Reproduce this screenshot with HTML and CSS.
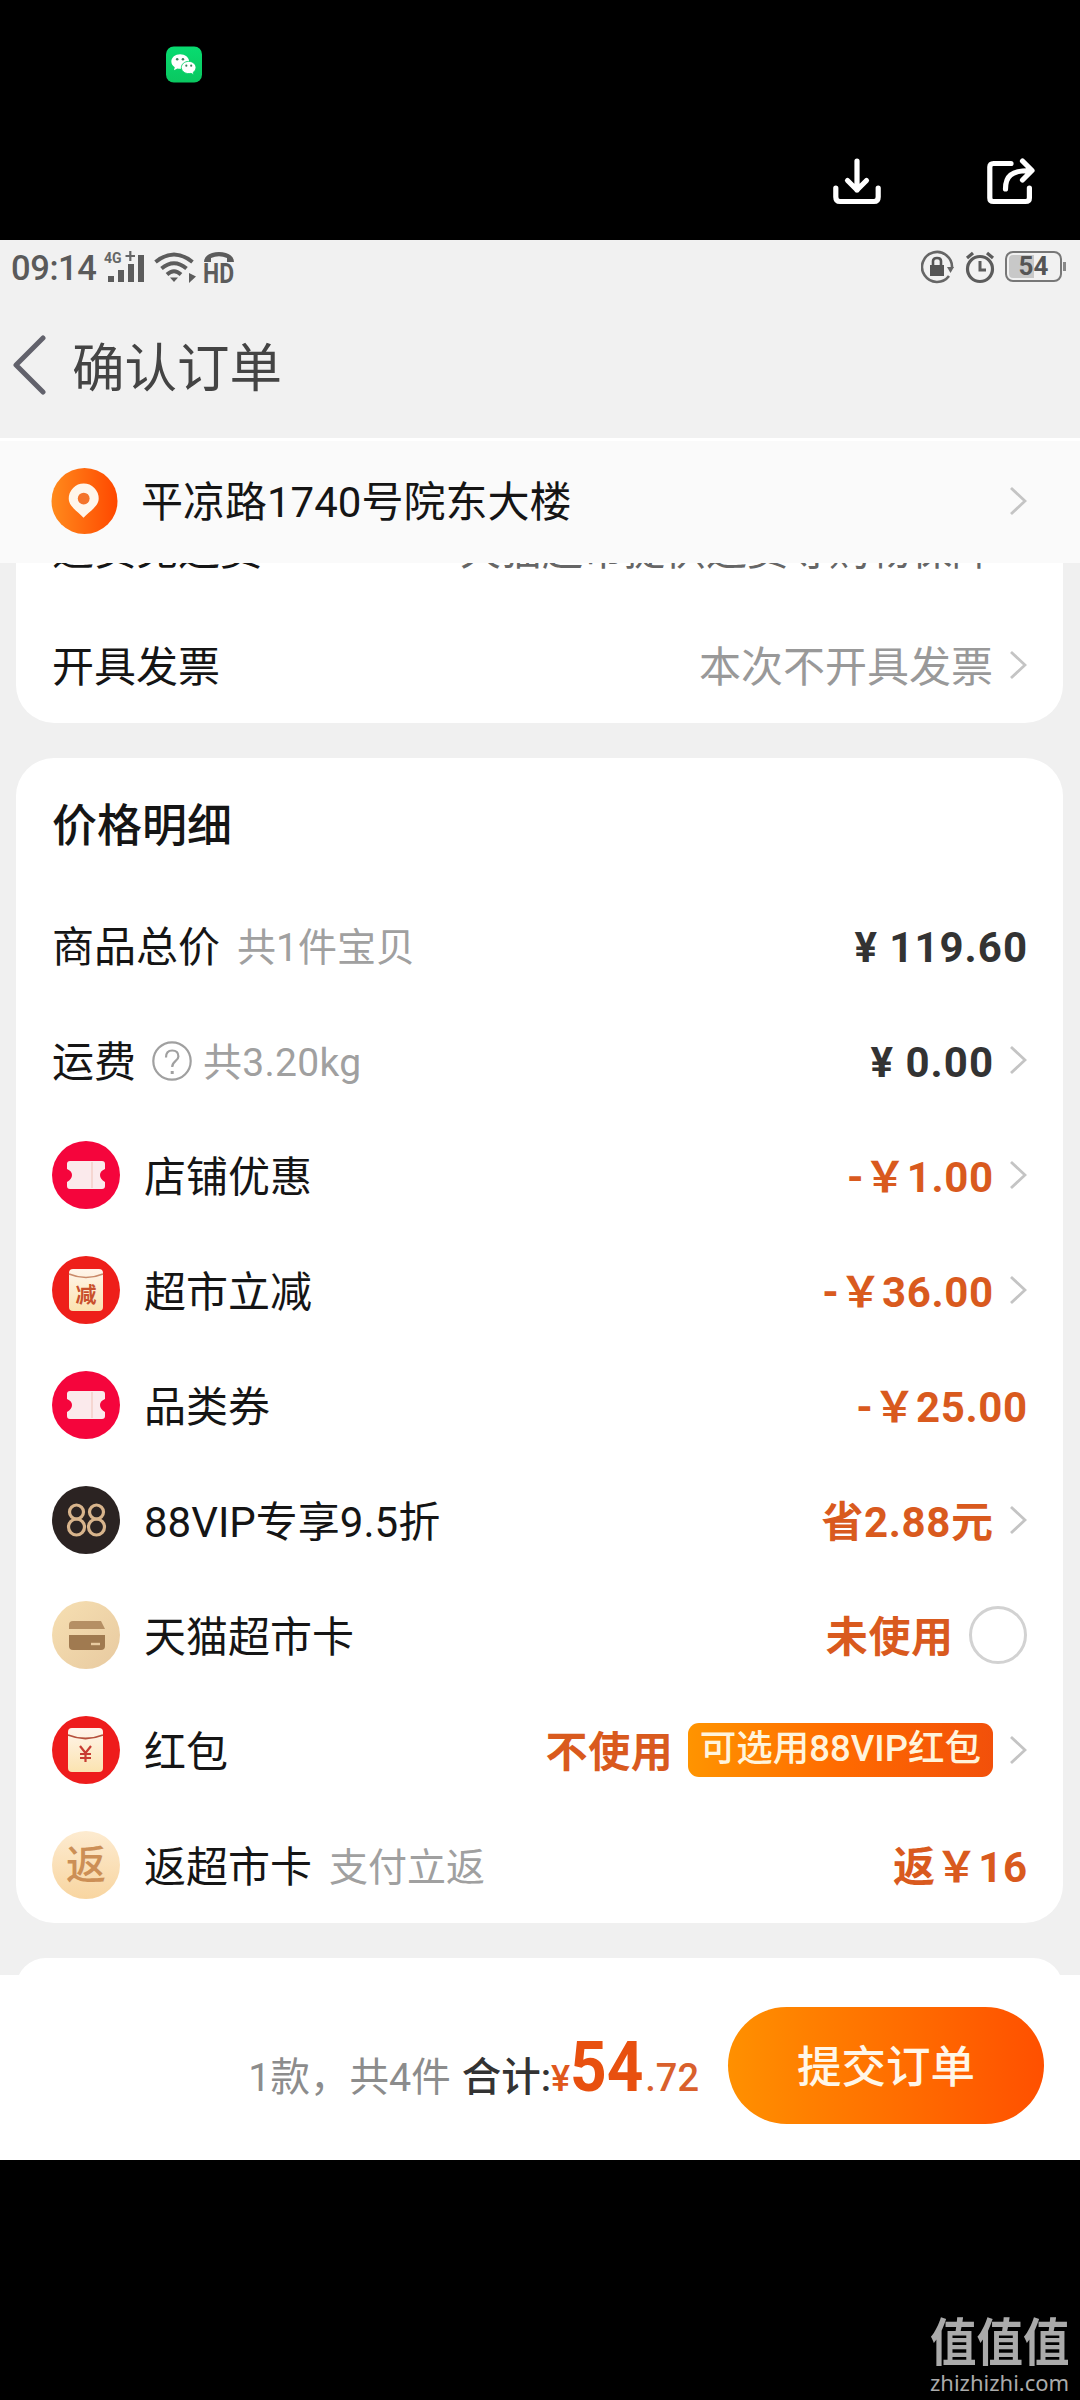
FILE: index.html
```html
<!DOCTYPE html>
<html lang="zh-CN">
<head>
<meta charset="utf-8">
<title>确认订单</title>
<link rel="stylesheet" href="styles.css">
</head>
<body>
<svg class="defs" aria-hidden="true">
  <defs>
    <linearGradient id="gOrange" x1="0" y1="0" x2="1" y2="0"><stop offset="0" stop-color="#ff8a1c"/><stop offset="1" stop-color="#ff4800"/></linearGradient>
    <linearGradient id="gCream" x1="0" y1="0" x2="0" y2="1"><stop offset="0" stop-color="#fff5ec"/><stop offset="1" stop-color="#fbe3b0"/></linearGradient>
    <linearGradient id="gGold" x1="0" y1="0" x2="1" y2="1"><stop offset="0" stop-color="#f6dfb2"/><stop offset="1" stop-color="#e8caa0"/></linearGradient>
    <linearGradient id="gPeach" x1="0" y1="0" x2="0" y2="1"><stop offset="0" stop-color="#fdebd0"/><stop offset="1" stop-color="#f8d5a0"/></linearGradient>
    <linearGradient id="gGreen" x1="0" y1="0" x2="0" y2="1"><stop offset="0" stop-color="#08dc70"/><stop offset="1" stop-color="#0ac760"/></linearGradient>
    <symbol id="chev" viewBox="0 0 18 30"><path d="M2 2 L16 15 L2 28" fill="none" stroke="#c4c4c4" stroke-width="2.8"/></symbol>
    <symbol id="ticket" viewBox="0 0 68 68"><circle cx="34" cy="34" r="34" fill="#f5053c"/><path d="M18 20 H50 Q53 20 53 23 V28 Q48 30 48 34 T53 41 V45 Q53 48 50 48 H18 Q15 48 15 45 V41 Q20 38 20 34 T15 28 V23 Q15 20 18 20Z" fill="#fbeaec"/><path d="M40 21V47" stroke="#f3cfc9" stroke-width="1.5"/></symbol>
  </defs>
</svg>

<header class="viewer">
  <svg class="wechat" viewBox="0 0 37 37">
    <rect width="37" height="37" rx="8" fill="url(#gGreen)"/>
    <path d="M14.500 8C9.500 8 5.500 11.300 5.500 15.500C5.500 18 6.800 20 9 21.400L8.200 24.500L11.700 22.700C18 24 23.800 20.500 23.800 15.500C23.800 11.300 19.500 8 14.500 8Z" fill="#fff"/>
    <path d="M23.300 15.300C27.600 15.300 30.800 18.100 30.800 21.600C30.800 23.700 29.700 25.400 28 26.500L28.600 29L25.700 27.600C20.500 28.800 15.800 25.800 15.800 21.600C15.800 18.100 19 15.300 23.300 15.300Z" fill="#fff" stroke="#0ad068" stroke-width=".9"/>
    <g fill="#397f5a"><circle cx="11.500" cy="13.200" r="1.300"/><circle cx="17.400" cy="13.200" r="1.300"/><circle cx="20.900" cy="19.700" r="1.100"/><circle cx="25.900" cy="19.700" r="1.100"/></g>
  </svg>
  <div class="tools">
    <svg class="tool" viewBox="0 0 48 48" fill="none" stroke="#fff" stroke-width="5.200" stroke-linecap="round" stroke-linejoin="round"><path d="M24 3V32M14.500 22.500L24 32L33.500 22.500M2.800 30V39Q2.800 43.500 7 43.500H41Q45.200 43.500 45.200 39V30"/></svg>
    <svg class="tool" viewBox="0 0 48 48" fill="none" stroke="#fff" stroke-width="5.200" stroke-linecap="round" stroke-linejoin="round"><path d="M24 5.500H6.500Q2.800 5.500 2.800 9V40Q2.800 43.500 6.500 43.500H38.500Q42.400 43.500 42.400 40V30M18.500 31C18.500 18.500 24 12.500 43 12.500M35.500 3L45 12.500L35.500 22"/></svg>
  </div>
</header>

<main class="phone">
  <div class="status">
    <span class="clock">09:14</span>
    <svg class="net" viewBox="0 0 42 34"><text x="0" y="13" font-size="14" font-weight="700" fill="#666">4G</text><path d="M21.500 6H31M26.300 1V11" stroke="#666" stroke-width="2.200"/><g fill="#5c5c5c"><rect x="4" y="26" width="6" height="6"/><rect x="14" y="20" width="6" height="12"/><rect x="24" y="14" width="6" height="18"/><rect x="34" y="5" width="6" height="27"/></g></svg>
    <svg class="wifi" viewBox="0 0 44 34" fill="none" stroke="#5c5c5c" stroke-width="3.900"><path d="M1.500 12Q20 -3 38.500 12M7.500 18.500Q20 8 32.500 18.500M13 24.500Q20 18 27 24.500"/><path d="M16 27.500H24L20 32Z" fill="#5c5c5c" stroke="none"/><path d="M35 23L42 26.500L35 33Z" fill="#5c5c5c" stroke="none"/></svg>
    <svg class="hd" viewBox="0 0 32 34"><path d="M1 12C1 -1.500 31 -1.500 31 12H24V8Q16 4.500 8 8V12Z" fill="#5c5c5c"/><text x="0" y="33" font-size="28" font-weight="700" textLength="31" lengthAdjust="spacingAndGlyphs" fill="#5c5c5c">HD</text></svg>
    <div class="status-right">
      <svg width="34" height="34" viewBox="0 0 34 34"><path d="M28 26A15 15 0 1 1 31 18" fill="none" stroke="#666" stroke-width="2.600"/><path d="M26 17H33L29.500 23Z" fill="#666"/><rect x="9" y="15" width="14" height="11" fill="#555"/><path d="M12 15V11Q12 8 16 8T20 11V15" fill="none" stroke="#555" stroke-width="2.600"/></svg>
      <svg width="30" height="34" viewBox="0 0 30 34" fill="none" stroke="#5c5c5c"><circle cx="15" cy="19" r="12.500" stroke-width="3.200"/><path d="M15 11V20H21" stroke-width="3"/><path d="M2 8L8 3M28 8L22 3" stroke-width="3.200"/></svg>
      <div class="battery"><span>54</span></div>
    </div>
  </div>

  <div class="nav">
    <svg class="back" viewBox="0 0 36 60"><path d="M31 3L4 30L31 57" fill="none" stroke="#62626c" stroke-width="5" stroke-linecap="round" stroke-linejoin="round"/></svg>
    <h1>确认订单</h1>
  </div>

  <div class="address">
    <svg class="pin" viewBox="0 0 68 68"><circle cx="34" cy="34" r="33.500" fill="url(#gOrange)"/><path d="M33 51C27 44.500 18 39.500 18 31.500A15.200 15.200 0 0 1 48.400 31.500C48.400 39.500 39 44.500 33 51Z" fill="#fff6ea"/><circle cx="33.200" cy="31.500" r="6" fill="#f4742a"/></svg>
    <span class="grow">平凉路1740号院东大楼</span>
    <svg class="chev"><use href="#chev"/></svg>
  </div>

  <div class="content">
    <section class="card service">
      <div class="row cut"><span>退货免运费</span><span class="right dim">天猫超市提供运费等购物保障</span></div>
      <div class="row invoice"><span>开具发票</span><span class="right light">本次不开具发票</span><svg class="chev"><use href="#chev"/></svg></div>
    </section>

    <section class="card prices">
      <h2>价格明细</h2>
      <div class="row"><span>商品总价</span><span class="note">共1件宝贝</span><b class="right dark">¥ 119.60</b></div>
      <div class="row"><span>运费</span><svg class="help" viewBox="0 0 40 40" fill="none" stroke="#a0a0a0" stroke-width="2.200"><circle cx="20" cy="20" r="18.700"/><path d="M14 16.500Q14 9.500 20.200 9.500T26.400 15.500C26.400 20 20.200 20 20.200 26"/><path d="M20.200 30V33" stroke-width="3"/></svg><span class="note tight">共3.20kg</span><b class="right dark">¥ 0.00</b><svg class="chev"><use href="#chev"/></svg></div>
      <div class="row"><svg class="ico"><use href="#ticket"/></svg><span>店铺优惠</span><b class="right">-￥1.00</b><svg class="chev"><use href="#chev"/></svg></div>
      <div class="row"><svg class="ico" viewBox="0 0 68 68"><circle cx="34" cy="34" r="34" fill="#ee1f1a"/><rect x="17" y="13" width="34" height="42" rx="4" fill="url(#gCream)"/><path d="M17 18Q34 25 51 18" fill="none" stroke="#c98a6a" stroke-width="1.600"/><text x="34" y="46" font-size="21" font-weight="700" text-anchor="middle" fill="#c9502c">减</text></svg><span>超市立减</span><b class="right">-￥36.00</b><svg class="chev"><use href="#chev"/></svg></div>
      <div class="row"><svg class="ico"><use href="#ticket"/></svg><span>品类券</span><b class="right">-￥25.00</b></div>
      <div class="row"><svg class="ico" viewBox="0 0 68 68"><circle cx="34" cy="34" r="34" fill="#2b2322"/><g fill="none" stroke="#d8b48c" stroke-width="3.200"><circle cx="24.500" cy="26" r="7"/><circle cx="24.500" cy="41" r="8"/><circle cx="44.500" cy="26" r="7"/><circle cx="44.500" cy="41" r="8"/></g></svg><span>88VIP专享9.5折</span><b class="right">省2.88元</b><svg class="chev"><use href="#chev"/></svg></div>
      <div class="row"><svg class="ico" viewBox="0 0 68 68"><circle cx="34" cy="34" r="34" fill="url(#gGold)"/><path d="M21 20H49L53 28H17V24Q17 20 21 20Z" fill="#b58f64"/><path d="M17 34H53V45Q53 49 49 49H21Q17 49 17 45Z" fill="#a07a50"/><path d="M39 43H48" stroke="#e8caa0" stroke-width="2.400"/></svg><span>天猫超市卡</span><b class="right">未使用</b><i class="radio"></i></div>
      <div class="row"><svg class="ico" viewBox="0 0 68 68"><circle cx="34" cy="34" r="34" fill="#ee1c1c"/><rect x="16" y="12" width="35" height="44" rx="4" fill="url(#gCream)"/><path d="M16 19Q33.500 26 51 19" fill="none" stroke="#b5503c" stroke-width="1.800"/><path d="M28 30L33.500 37L39 30M33.500 37V46M28 38H39M28 42H39" fill="none" stroke="#c73c32" stroke-width="2.200"/></svg><span>红包</span><b class="right">不使用</b><span class="badge">可选用88VIP红包</span><svg class="chev"><use href="#chev"/></svg></div>
      <div class="row"><svg class="ico" viewBox="0 0 68 68"><circle cx="34" cy="34" r="34" fill="url(#gPeach)"/><text x="34" y="48" font-size="40" font-weight="500" text-anchor="middle" fill="#cc8f56">返</text></svg><span>返超市卡</span><span class="note">支付立返</span><b class="right">返￥16</b></div>
    </section>

    <section class="card next"></section>
  </div>

  <footer class="bar">
    <div class="total"><span class="count">1款，共4件</span><span class="sum">合计:</span><span class="yen">¥</span><span class="big">54</span><span class="cents">.72</span></div>
    <button class="submit">提交订单</button>
  </footer>
</main>

<div class="mark"><span class="mark-cn">值值值</span><span class="mark-url">zhizhizhi.com</span></div>
</body>
</html>
```
FILE: styles.css
```css
* { box-sizing: border-box; margin: 0; padding: 0; }
body {
  width: 1080px; height: 2400px; overflow: hidden; background: #000;
  display: flex; flex-direction: column;
  font-family: Roboto, "Noto Sans CJK SC", sans-serif;
  font-size: 42px; line-height: 1.2; color: #151515;
}
svg { display: block; flex: none; }
.defs { position: absolute; width: 0; height: 0; }

.viewer { height: 240px; flex: none; padding: 46px 45px 0 166px; }
.wechat { width: 36px; height: 37px; }
.tools { display: flex; justify-content: flex-end; gap: 106px; margin-top: 75px; }
.tool { width: 48px; height: 48px; }

.phone { height: 1920px; flex: none; display: flex; flex-direction: column; background: #f1f1f1; }
.status { height: 56px; display: flex; align-items: center; padding: 0 13px 3px 11px; color: #5a5a5a; }
.clock { font-size: 34.500px; font-weight: 500; width: 93px; padding-top: 4px; letter-spacing: -.4px; }
.net { width: 42px; height: 34px; overflow: visible; }
.wifi { width: 44px; height: 34px; margin-left: 8px; }
.hd { width: 32px; height: 34px; margin-left: 5px; }
.status-right { margin-left: auto; display: flex; align-items: center; gap: 10px; }
.battery {
  width: 57px; height: 31px; border: 2px solid #777; border-radius: 8px; margin-right: 5px;
  background: linear-gradient(90deg, #c8c8c8 52%, transparent 52%) content-box; padding: 2px;
  display: flex; align-items: center; justify-content: center; position: relative;
  font-size: 26px; font-weight: 700; color: #555;
}
.battery::after { content: ""; position: absolute; right: -6px; top: 9px; width: 3px; height: 9px; background: #888; }

.nav { height: 142px; display: flex; align-items: center; padding: 0 0 4px 12px; }
.back { width: 36px; height: 60px; }
h1 { font-size: 52.500px; font-weight: 400; color: #444; margin-left: 24px; padding-top: 9px; }

.address {
  height: 125px; background: #fafafa; border-top: 3px solid #fff;
  display: flex; align-items: center; padding: 0 53px 2px 51px;
}
.pin { width: 67px; height: 68px; margin-right: 23px; }
.grow { flex: 1; padding-top: 4px; }
.chev { width: 18px; height: 30px; }

.content { height: 1412px; overflow: hidden; padding: 0 17px 0 16px; background: #f0f0f0; display: flex; flex-direction: column; gap: 35px; }
.card { background: #fff; border-radius: 38px; padding: 0 36px; flex: none; }
.row { height: 115px; display: flex; align-items: center; }
.row > span, .row > b { padding-top: 5px; }
.right { margin-left: auto; }
.row .chev { margin-left: 16px; margin-bottom: 2px; }
.service { height: 160px; border-radius: 0 0 38px 38px; overflow: hidden; display: flex; flex-direction: column; justify-content: flex-end; }
.cut { flex: none; padding-right: 34px; }
.cut > span { padding-top: 2px; }
.invoice { flex: none; }
.dim { color: #666; font-size: 41px; }
.light { color: #999; }

h2 { height: 130px; padding-top: 42px; font-size: 45px; font-weight: 500; }
.note { color: #a0a0a0; font-size: 39px; margin-left: 17px; }
.row > .tight { margin-left: 11px; letter-spacing: .3px; }
.help { width: 40px; height: 40px; margin-left: 16px; }
.ico { width: 68px; height: 68px; margin: -2px 24px 0 0; }
b { font-weight: 700; color: #d95a1e; letter-spacing: .6px; margin-right: -.6px; }
.dark { color: #333; letter-spacing: 1px; margin-right: -1px; }
.radio { width: 58px; height: 58px; border: 3px solid #d2d2d2; border-radius: 50%; margin-left: 16px; margin-bottom: 2px; }
.row > .badge {
  margin: 0 0 2px 15px; height: 54px; line-height: 52px; padding: 0 12px; border-radius: 11px; color: #fff4dc;
  font-size: 36.500px; font-weight: 500; background: linear-gradient(90deg, #ff9400, #ff6a00 50%, #f2500a);
}
.next { height: 60px; }

.bar { height: 185px; background: #fff; display: flex; align-items: center; justify-content: flex-end; padding: 0 36px 4px 0; }
.total { display: flex; align-items: baseline; font-size: 39.500px; margin-right: 29px; padding-top: 2px; }
.count { color: #8c8c8c; margin-right: 11px; }
.sum { color: #333; font-weight: 500; }
.yen { color: #e0581c; font-size: 36px; font-weight: 500; }
.big { color: #e8500f; font-size: 71px; font-weight: 700; width: 75px; transform: scaleX(.9); transform-origin: 0 0; }
.cents { color: #d9602c; font-size: 38px; font-weight: 500; }
.submit {
  width: 316px; height: 117px; border: 0; border-radius: 59px; color: #fff6e8; padding-top: 5px;
  background: linear-gradient(90deg, #ff9000, #ff5000); font: 500 44.500px/1 Roboto, "Noto Sans CJK SC", sans-serif;
}

.mark { margin: 155px 10px 0 auto; width: 140px; display: flex; flex-direction: column; color: #aaa; }
.mark-cn { font-size: 46.500px; font-weight: 700; line-height: 56px; transform: scaleY(1.1); }
.mark-url { font: 22px/28px "Noto Sans", sans-serif; margin-top: -3px; }
```
